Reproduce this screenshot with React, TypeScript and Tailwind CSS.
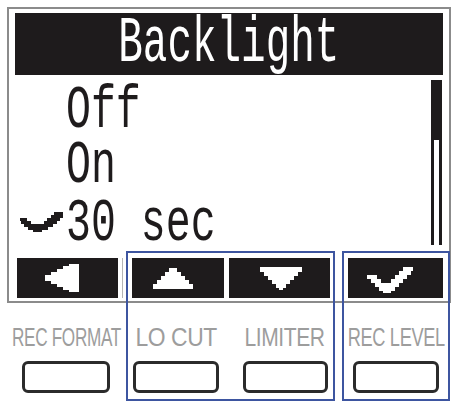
import React from "react";

// x, y, w, h of each filled block in an LCD-style pixel icon
type Cell = [number, number, number, number];

const leftArrow: Cell[] = [
  [0, 11, 6, 6],
  [6, 8, 6, 12],
  [12, 5, 6, 18],
  [18, 2, 6, 24],
  [24, 0, 10, 28],
];
const upArrow: Cell[] = [
  [16, 0, 8, 4],
  [12, 4, 16, 4],
  [8, 8, 24, 4],
  [4, 12, 32, 4],
  [0, 16, 40, 5],
];
const downArrow: Cell[] = [
  [0, 0, 42, 5],
  [4, 5, 34, 4],
  [8, 9, 26, 4],
  [12, 13, 18, 4],
  [16, 17, 10, 4],
  [19, 21, 4, 2],
];
const keyCheck: Cell[] = [
  [36, 0, 10, 4],
  [32, 4, 12, 4],
  [0, 8, 10, 4],
  [28, 8, 12, 4],
  [4, 12, 10, 4],
  [24, 12, 12, 4],
  [8, 16, 24, 4],
  [12, 20, 16, 4],
  [16, 24, 8, 2],
];
const listCheck: Cell[] = [
  [34, 0, 9, 3],
  [31, 3, 12, 3],
  [0, 6, 7, 3],
  [27, 6, 13, 3],
  [1, 9, 10, 3],
  [24, 9, 13, 3],
  [4, 12, 29, 3],
  [8, 15, 20, 3],
  [13, 18, 9, 2],
];

function PixelIcon({ w, h, cells, fill }: { w: number; h: number; cells: Cell[]; fill: string }) {
  return (
    <svg width={w} height={h} viewBox={`0 0 ${w} ${h}`} shapeRendering="crispEdges">
      {cells.map(([x, y, cw, ch], i) => (
        <rect key={i} x={x} y={y} width={cw} height={ch} fill={fill} />
      ))}
    </svg>
  );
}

const lcdFont = "font-['Liberation_Mono',monospace]";

function MenuRow({ label, checked, h }: { label: string; checked?: boolean; h: string }) {
  return (
    <div className={`grid grid-cols-[57px_1fr] ${h}`}>
      <div className="pl-[11px] pt-[13px]">
        {checked && <PixelIcon w={43} h={20} cells={listCheck} fill="#1e1b1c" />}
      </div>
      <div>
        <span
          className={`${lcdFont} inline-block origin-left scale-x-[0.67] whitespace-pre text-[62px] leading-[50px] text-[#1e1b1c]`}
        >
          {label}
        </span>
      </div>
    </div>
  );
}

const buttons = [
  { label: "REC FORMAT", col: "w-[112px]", btn: "w-[88px]", squeeze: "scale-x-[0.66]" },
  { label: "LO CUT", col: "w-[108px]", btn: "w-[86px]", squeeze: "scale-x-[0.88]" },
  { label: "LIMITER", col: "w-[110px]", btn: "w-[85px]", squeeze: "scale-x-[0.81]" },
  { label: "REC LEVEL", col: "w-[112px]", btn: "w-[86px]", squeeze: "scale-x-[0.70]" },
];

export default function App() {
  return (
    <div className="relative h-[401px] w-[453px] overflow-hidden bg-white">
      {/* LCD screen */}
      <div className="ml-[7px] mt-[7px] flex h-[296px] w-[444px] flex-col border-2 border-[#8b8b8b] bg-white">
        <div className="mx-[6px] mt-[4px] flex h-[62px] items-center justify-center bg-[#1e1b1c]">
          <span className={`${lcdFont} inline-block scale-x-[0.64] text-[64px] leading-none text-white`}>
            Backlight
          </span>
        </div>

        <div className="flex h-[183px]">
          <div className="flex-1 pt-[11px]">
            <MenuRow label="Off" h="h-[55px]" />
            <MenuRow label="On" h="h-[58px]" />
            <MenuRow label="30 sec" checked h="h-[50px]" />
          </div>
          {/* scroll bar */}
          <div className="mr-[7px] mt-[5px] flex h-[165px] w-[11px] flex-col">
            <div className="h-[60px] bg-[#1e1b1c]" />
            <div className="flex-1 border-x-[3px] border-[#1e1b1c]" />
          </div>
        </div>

        {/* soft keys */}
        <div className="flex h-[40px] pl-[8px]">
          <div className="flex w-[101px] items-center justify-center bg-[#1e1b1c] pr-[11px]">
            <PixelIcon w={34} h={28} cells={leftArrow} fill="#fff" />
          </div>
          <div className="ml-[4px] w-px bg-[#b5b5b5]" />
          <div className="ml-[9px] flex w-[92px] items-center justify-center bg-[#1e1b1c] pr-[10px]">
            <PixelIcon w={40} h={21} cells={upArrow} fill="#fff" />
          </div>
          <div className="ml-[5px] flex w-[101px] items-center justify-center bg-[#1e1b1c] pl-[3px]">
            <PixelIcon w={42} h={23} cells={downArrow} fill="#fff" />
          </div>
          <div className="ml-[18px] flex w-[95px] items-center justify-center bg-[#1e1b1c] pr-[11px] pt-[3px]">
            <PixelIcon w={46} h={26} cells={keyCheck} fill="#fff" />
          </div>
        </div>
      </div>

      {/* button labels and hardware keys */}
      <div className="ml-[10px] mt-[21px] flex">
        {buttons.map((b) => (
          <div key={b.label} className={`flex ${b.col} flex-col items-center`}>
            <div className="flex w-full justify-center">
              <span
                className={`inline-block whitespace-nowrap ${b.squeeze} font-['Liberation_Sans',Arial,sans-serif] text-[26px] leading-[26px] tracking-[-0.5px] text-[#9d9d9d]`}
              >
                {b.label}
              </span>
            </div>
            <div className={`mt-[11px] h-[32px] ${b.btn} rounded-[6px] border-[3px] border-[#2b2b2b] bg-white`} />
          </div>
        ))}
      </div>

      {/* highlight frames */}
      <div className="pointer-events-none absolute left-[126px] top-[251px] h-[150px] w-[209px] border-2 border-[#3d55a0]" />
      <div className="pointer-events-none absolute left-[342px] top-[251px] h-[150px] w-[108px] border-2 border-[#3d55a0]" />
    </div>
  );
}
